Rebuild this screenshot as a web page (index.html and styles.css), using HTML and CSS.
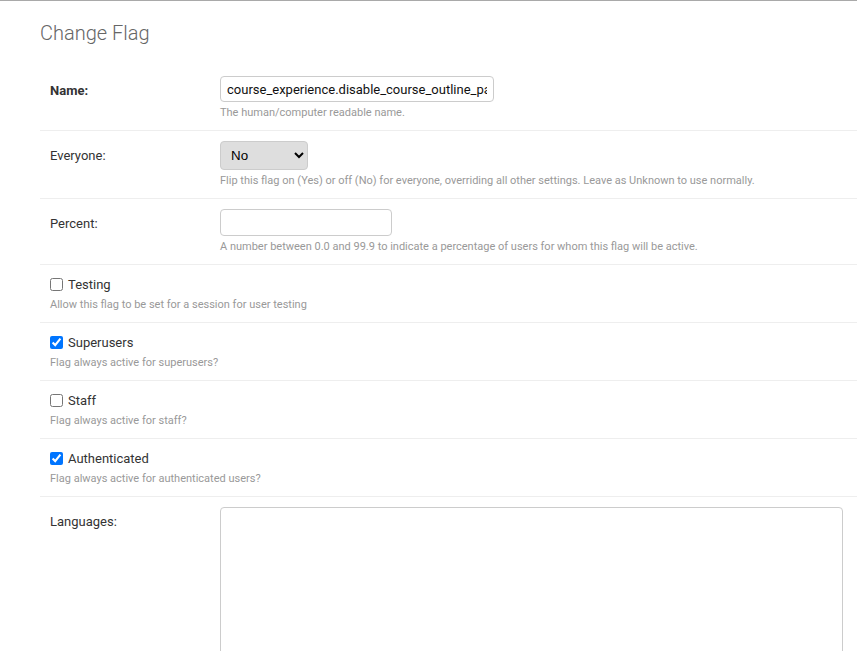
FILE: index.html
```html
<!DOCTYPE html>
<html>
<head>
<meta charset="utf-8">
<link rel="stylesheet" href="styles.css">
</head>
<body>
<div class="page">
  <div class="content">
    <h1 class="title">Change Flag</h1>
    <form class="form">
      <div class="row">
        <label class="label required">Name:</label>
        <div class="field">
          <input class="text" type="text" value="course_experience.disable_course_outline_page">
          <div class="help">The human/computer readable name.</div>
        </div>
      </div>
      <div class="row">
        <label class="label">Everyone:</label>
        <div class="field">
          <select class="select">
            <option>Unknown</option>
            <option>Yes</option>
            <option selected>No</option>
          </select>
          <div class="help">Flip this flag on (Yes) or off (No) for everyone, overriding all other settings. Leave as Unknown to use normally.</div>
        </div>
      </div>
      <div class="row">
        <label class="label">Percent:</label>
        <div class="field">
          <input class="text short" type="text" value="">
          <div class="help">A number between 0.0 and 99.9 to indicate a percentage of users for whom this flag will be active.</div>
        </div>
      </div>
      <div class="row check-row">
        <div class="check-line"><input type="checkbox" class="check"><span>Testing</span></div>
        <div class="help">Allow this flag to be set for a session for user testing</div>
      </div>
      <div class="row check-row">
        <div class="check-line"><input type="checkbox" class="check" checked><span>Superusers</span></div>
        <div class="help">Flag always active for superusers?</div>
      </div>
      <div class="row check-row">
        <div class="check-line"><input type="checkbox" class="check"><span>Staff</span></div>
        <div class="help">Flag always active for staff?</div>
      </div>
      <div class="row check-row">
        <div class="check-line"><input type="checkbox" class="check" checked><span>Authenticated</span></div>
        <div class="help">Flag always active for authenticated users?</div>
      </div>
      <div class="row">
        <label class="label">Languages:</label>
        <div class="field">
          <textarea class="area"></textarea>
        </div>
      </div>
    </form>
  </div>
</div>
</body>
</html>
```

FILE: styles.css
```css
html, body {
  margin: 0;
  padding: 0;
  background: #fff;
}
body {
  font-family: Roboto, "Liberation Sans", sans-serif;
  color: #333;
  font-size: 13px;
  overflow: hidden;
}
.page {
  border-top: 1px solid #a9a9a9;
}
.content {
  padding: 21px 0 0 40px;
}
.title {
  margin: 0 0 21px 0;
  font-size: 20px;
  font-weight: 300;
  color: #666;
  line-height: 23px;
}
.form {
  margin: 0;
}
.row {
  display: flex;
  padding: 10px;
  border-bottom: 1px solid #eee;
}
.label {
  width: 160px;
  padding: 7px 10px 0 0;
  line-height: 15px;
  color: #333;
  flex: none;
}
.label.required {
  font-weight: bold;
}
.field {
  flex: 1;
  min-width: 0;
}
.text {
  display: block;
  box-sizing: border-box;
  width: 274px;
  height: 26px;
  margin: 0;
  padding: 5px 6px;
  border: 1px solid #ccc;
  border-radius: 4px;
  font-family: Roboto, "Liberation Sans", sans-serif;
  font-size: 13px;
  color: #111;
  background: #fff;
}
.text.short {
  width: 172px;
  height: 27px;
}
.select {
  display: block;
  box-sizing: border-box;
  width: 88px;
  height: 29px;
  margin: 0;
  padding: 0 4px 0 6px;
  border: 1px solid #ccc;
  border-radius: 4px;
  background-color: #dedede;
  font-family: "Liberation Sans", Arial, sans-serif;
  font-size: 13.333px;
  color: #000;
}
.help {
  padding-top: 4px;
  font-size: 11px;
  line-height: 14px;
  color: #999;
}
.check-row {
  flex-direction: column;
}
.check-line {
  display: flex;
  align-items: center;
  height: 19px;
}
.check {
  margin: 0 5px 0 0;
  width: 13px;
  height: 13px;
}
.check-line span {
  font-size: 13px;
  color: #333;
}
.area {
  display: block;
  box-sizing: border-box;
  width: calc(100% - 4px);
  height: 220px;
  margin: 0;
  border: 1px solid #ccc;
  border-radius: 4px;
  resize: none;
  background: #fff;
}
```
